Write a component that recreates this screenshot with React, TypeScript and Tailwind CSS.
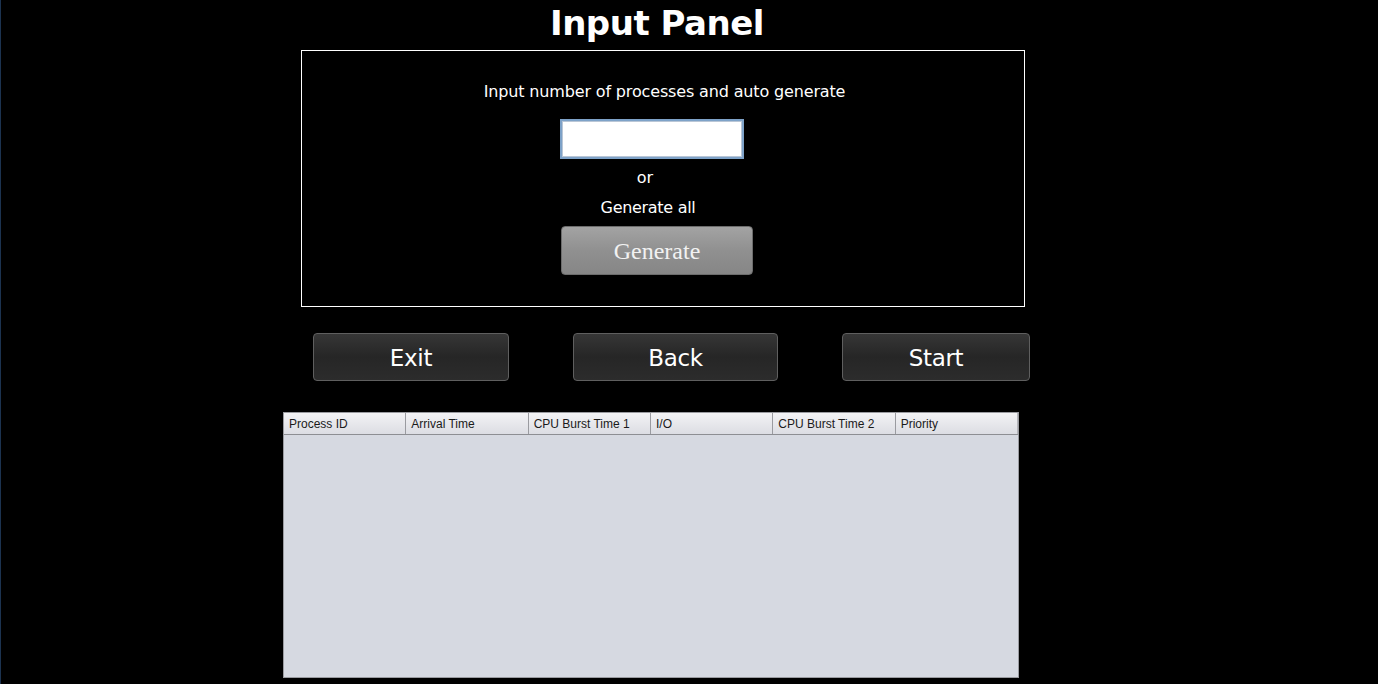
import React from "react";

const columns = ["Process ID", "Arrival Time", "CPU Burst Time 1", "I/O", "CPU Burst Time 2", "Priority"];

function DarkButton({ label, width }: { label: string; width: string }) {
  return (
    <button
      className={`${width} h-[48px] pt-[3px] rounded-[4px] border border-[#5f5f5f] bg-gradient-to-b from-[#363636] via-[#262626] to-[#2c2c2c] text-[23px] tracking-[-0.3px] text-white`}
    >
      {label}
    </button>
  );
}

export default function App() {
  return (
    <div
      className="w-[1378px] h-[684px] overflow-hidden bg-black border-l border-[#1c3350] text-white"
      style={{ fontFamily: '"DejaVu Sans", Verdana, sans-serif' }}
    >
      {/* TITLE */}
      <div className="h-[50px] flex items-center pl-[549px]">
        <h1 className="text-[34px] font-bold leading-none tracking-[-0.5px] mt-[-4px]">Input Panel</h1>
      </div>

      {/* INPUT PANEL */}
      <div className="ml-[300px] w-[724px] h-[257px] border border-white flex flex-col items-center">
        <p className="mt-[31px] text-[16px] leading-[20px] tracking-[-0.15px] pl-[3px]">
          Input number of processes and auto generate
        </p>
        <input
          type="text"
          className="mt-[17px] ml-[-22px] w-[184px] h-[40px] bg-white border-2 border-[#7ea2c8] outline outline-1 outline-[#b9c6d6] -outline-offset-3 text-black"
        />
        <span className="mt-[9px] ml-[-36px] text-[16px] leading-[20px]">or</span>
        <span className="mt-[10px] ml-[-30px] text-[16px] leading-[20px] tracking-[-0.3px]">Generate all</span>
        <button
          className="mt-[8px] ml-[-12px] w-[192px] h-[49px] rounded-[4px] border border-[#6c6c6c] bg-gradient-to-b from-[#a3a3a3] via-[#909090] to-[#868686] text-[24px] text-[#f2f2f2]"
          style={{ fontFamily: '"Liberation Serif", "Times New Roman", serif' }}
        >
          Generate
        </button>
      </div>

      {/* ACTIONS */}
      <div className="flex mt-[26px] ml-[312px]">
        <DarkButton label="Exit" width="w-[196px]" />
        <div className="ml-[64px]">
          <DarkButton label="Back" width="w-[205px]" />
        </div>
        <div className="ml-[64px]">
          <DarkButton label="Start" width="w-[188px]" />
        </div>
      </div>

      {/* TABLE */}
      <div className="mt-[31px] ml-[282px] w-[736px] h-[266px] border border-[#9a9ba0] bg-[#d6d9e1] flex flex-col">
        <div
          className="flex h-[22px] border-b border-[#8d8e93] bg-gradient-to-b from-[#f3f3f5] to-[#dcdde3]"
          style={{ fontFamily: '"Liberation Sans", Arial, sans-serif' }}
        >
          {columns.map((col, i) => (
            <div
              key={col}
              className={`w-[122.5px] flex items-center pl-[5px] text-[12px] text-[#1a1a1a] ${
                i < columns.length - 1 ? "border-r border-[#9a9ba0]" : "border-r border-[#b5b6bb]"
              }`}
            >
              {col}
            </div>
          ))}
        </div>
      </div>
    </div>
  );
}
